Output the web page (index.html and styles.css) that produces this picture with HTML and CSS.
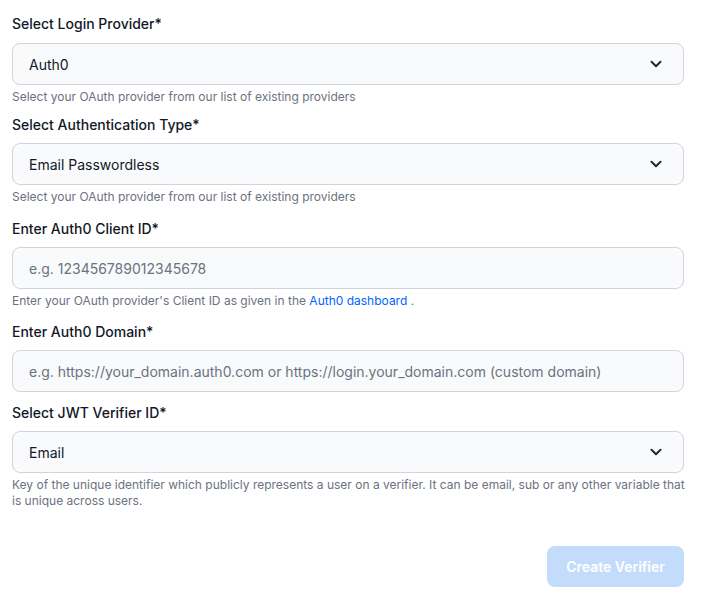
FILE: index.html
```
<!DOCTYPE html>
<html>
<head>
<meta charset="utf-8">
<link rel="stylesheet" href="styles.css">
</head>
<body>
<form class="form">
  <div class="field f1">
    <label class="label">Select Login Provider*</label>
    <div class="box select"><span class="value">Auth0</span>
      <svg class="chev" width="12" height="8" viewBox="0 0 12 8"><path d="M1.5 1.8 6 6.2l4.5-4.4" fill="none" stroke="#1f2937" stroke-width="2" stroke-linecap="round" stroke-linejoin="round"/></svg>
    </div>
    <p class="help">Select your OAuth provider from our list of existing providers</p>
  </div>
  <div class="field f2">
    <label class="label">Select Authentication Type*</label>
    <div class="box select"><span class="value">Email Passwordless</span>
      <svg class="chev" width="12" height="8" viewBox="0 0 12 8"><path d="M1.5 1.8 6 6.2l4.5-4.4" fill="none" stroke="#1f2937" stroke-width="2" stroke-linecap="round" stroke-linejoin="round"/></svg>
    </div>
    <p class="help">Select your OAuth provider from our list of existing providers</p>
  </div>
  <div class="field f3">
    <label class="label">Enter Auth0 Client ID*</label>
    <div class="box"><span class="placeholder">e.g. 123456789012345678</span></div>
    <p class="help">Enter your OAuth provider's Client ID as given in the <a class="link">Auth0 dashboard</a> .</p>
  </div>
  <div class="field f4">
    <label class="label">Enter Auth0 Domain*</label>
    <div class="box"><span class="placeholder">e.g. https://your_domain.auth0.com or https://login.your_domain.com (custom domain)</span></div>
  </div>
  <div class="field f5">
    <label class="label">Select JWT Verifier ID*</label>
    <div class="box select"><span class="value">Email</span>
      <svg class="chev" width="12" height="8" viewBox="0 0 12 8"><path d="M1.5 1.8 6 6.2l4.5-4.4" fill="none" stroke="#1f2937" stroke-width="2" stroke-linecap="round" stroke-linejoin="round"/></svg>
    </div>
    <p class="help wide">Key of the unique identifier which publicly represents a user on a verifier. It can be email, sub or any other variable that is unique across users.</p>
  </div>
  <div class="actions">
    <button type="button" class="btn">Create Verifier</button>
  </div>
</form>
</body>
</html>
```

FILE: styles.css
```
html, body {
  margin: 0;
  padding: 0;
  background: #ffffff;
}
body {
  font-family: Inter, "Noto Sans", sans-serif;
  color: #111827;
}
.form {
  width: 672px;
  padding: 14px 0 0 12px;
  display: flex;
  flex-direction: column;
}
.field {
  display: flex;
  flex-direction: column;
}
.label {
  font-size: 14px;
  line-height: 20px;
  font-weight: 500;
  color: #111827;
  margin-bottom: 8px;
}
.f1 .label {
  margin-bottom: 9px;
}
.box {
  box-sizing: border-box;
  height: 42px;
  border: 1px solid #d1d5db;
  border-radius: 8px;
  background: #f9fafb;
  display: flex;
  align-items: center;
  padding: 0 21px 0 16px;
  font-size: 14px;
}
.select {
  justify-content: space-between;
}
.value {
  color: #111827;
}
.placeholder {
  color: #6b7280;
  font-size: 14px;
}
.chev {
  display: block;
}
.help {
  margin: 4px 0 0 0;
  font-size: 12px;
  line-height: 16px;
  color: #6b7280;
}
.wide {
  margin-right: -6px;
}
.link {
  color: #0364ff;
}
.f2 { margin-top: 10px; }
.f3 { margin-top: 14px; }
.f4 { margin-top: 13px; }
.f5 { margin-top: 11px; }
.actions {
  display: flex;
  justify-content: flex-end;
  margin-top: 37px;
}
.btn {
  width: 137px;
  height: 41px;
  border: none;
  border-radius: 8px;
  background: #c3dcfc;
  color: #ffffff;
  font-family: Inter, "Noto Sans", sans-serif;
  font-size: 14px;
  font-weight: 600;
}
```
